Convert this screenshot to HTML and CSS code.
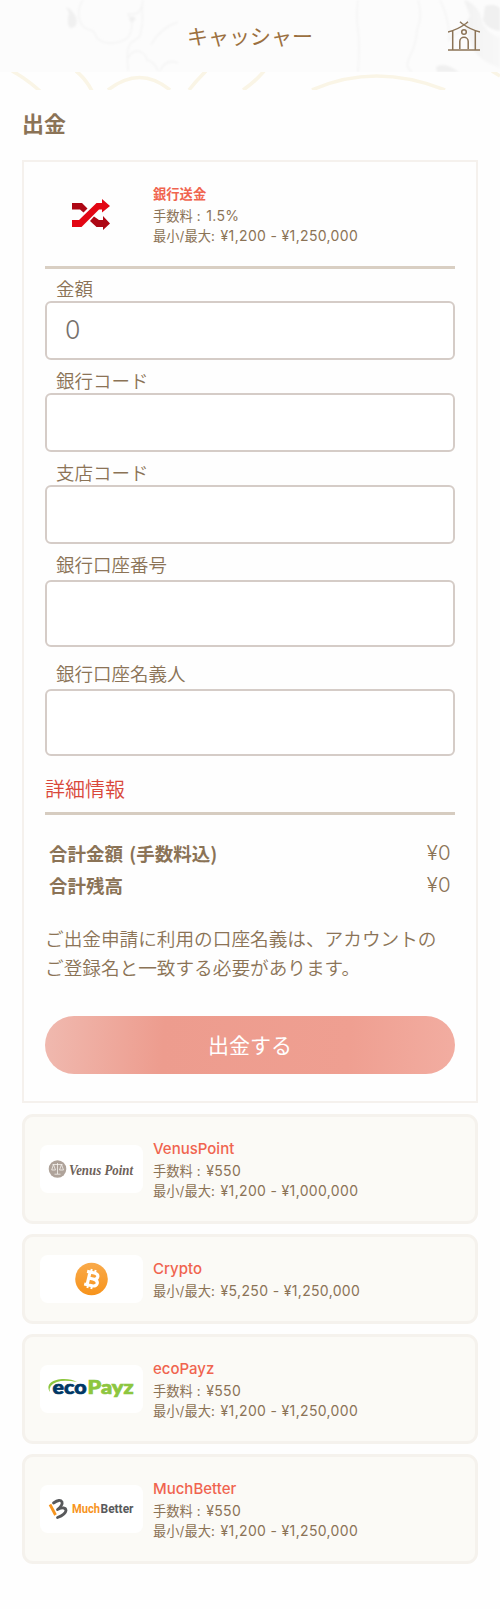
FILE: index.html
```html
<!DOCTYPE html>
<html lang="ja">
<head>
<meta charset="utf-8">
<title>キャッシャー</title>
<link rel="stylesheet" href="styles.css">
</head>
<body>
<header class="header">
  <svg class="marble" viewBox="0 0 500 72" fill="none" stroke="#f4f4f4">
    <defs>
      <linearGradient id="vein"><stop offset="0" stop-color="#f2f2f2"/><stop offset="1" stop-color="#f8f8f8"/></linearGradient>
      <filter id="soft" x="-20%" y="-20%" width="140%" height="140%"><feGaussianBlur stdDeviation=".8"/></filter>
    </defs>
    <g filter="url(#soft)">
      <path stroke-width="1.5" d="M83 0C76 10 77 27 90 30C94 30 95 34 97 38C106 47 126 43 130 34C135 20 129 17 128 14C140 16 142 8 143 0M143 0C140 12 145 20 141 30C142 37 136 39 132 42C125 48 128 60 128 71M128 58C135 45 146 53 147 60Q155 62 158 71M160 71Q166 58 178 63M358 0Q356 15 358 30T358 72M418 0Q423 16 417 30Q416 45 410 56T412 72M151 45Q160 28 178 22M440 0Q450 20 449 40Q470 20 486 28"/>
      <path fill="#f0f0f0" stroke="none" d="M69 13Q66 24 70 28Q79 28 76 17Q71 8 66 7ZM130 17Q137 15 135 20Q131 25 129 19ZM485 6Q497 3 500 9V31Q486 29 483 20ZM436 67Q444 61 459 72H437Z"/>
      <path fill="url(#vein)" stroke="none" d="M464 0Q480 4 483 25Q490 35 500 37V68Q474 59 471 42Q462 25 470 16Z"/>
    </g>
  </svg>
  <h1 class="header-title">キャッシャー</h1>
  <svg class="home" viewBox="0 0 32 31" fill="none" stroke="#8b7356" stroke-width="1.5">
    <path d="M0 29H32M4.7 29V9.8M27.3 29V9.8M0 11Q9 9 18 2.5L20 .8M32 11Q23 9 14 2.5L12 .8M11.8 28V20.5a4.2 4.2 0 0 1 8.4 0V28"/>
    <circle cx="16" cy="11" r="2.3"/>
  </svg>
</header>
<svg class="waves" viewBox="0 0 500 18" fill="none" stroke="#faf5e6" stroke-width="3.6">
  <path d="M12 -1Q25 6 40 19M76 -1Q86 7 92 19M108 18Q140 -7 170 18M189 18Q196 9 206 -1M243 18Q255 10 264 -1M312 18Q375 -10 445 18M492 -1L500 4"/>
</svg>
<main class="main">
  <h2 class="page-title">出金</h2>
  <section class="panel">
    <div class="method">
      <div class="method-logo">
        <svg class="shuffle" viewBox="0 0 38 32">
          <path fill="#ad0714" d="M0 4H10L15.500 9.500L11.500 13.500L8 10.500H0ZM22 17.500L27 21H31V17L38 24.500L31 31V28H24.500L18 22Z"/>
          <path fill="#e20613" d="M0 21H7L24.500 4H30V0L38 7L30 13.500V10.500H27L9.500 28H0Z"/>
        </svg>
      </div>
      <div class="info">
        <h3 class="name name-ja">銀行送金</h3>
        <p class="detail">手数料 : <span class="amount">1.5%</span></p>
        <p class="detail">最小/最大: <span class="amount">¥1,200 - ¥1,250,000</span></p>
      </div>
    </div>
    <form class="form">
      <label class="field"><span class="label">金額</span><input class="input" value="0"></label>
      <label class="field"><span class="label">銀行コード</span><input class="input"></label>
      <label class="field"><span class="label">支店コード</span><input class="input"></label>
      <label class="field field-large"><span class="label">銀行口座番号</span><input class="input"></label>
      <label class="field field-large field-last"><span class="label">銀行口座名義人</span><input class="input"></label>
      <h3 class="details-title">詳細情報</h3>
      <dl class="totals">
        <div class="total"><dt>合計金額 (手数料込)</dt><dd>¥0</dd></div>
        <div class="total"><dt>合計残高</dt><dd>¥0</dd></div>
      </dl>
      <p class="note">ご出金申請に利用の口座名義は、アカウントの<br>ご登録名と一致する必要があります。</p>
      <button class="submit" type="button">出金する</button>
    </form>
  </section>
  <section class="card">
    <div class="logo">
      <svg viewBox="0 0 103 48">
        <circle cx="17.500" cy="24" r="8.800" fill="#afa39a"/>
        <g fill="none" stroke="#f5f2ef" stroke-width=".8"><path d="M12.500 19.500H22.500M17.500 18V29M14.500 29.200H20.500M13.500 19.500L11.700 25H15.500L13.500 19.500M21.500 19.500L19.500 25H23.500L21.500 19.500"/></g>
        <text class="venus" x="29" y="30" textLength="64" lengthAdjust="spacingAndGlyphs">Venus Point</text>
      </svg>
    </div>
    <div class="info">
      <h3 class="name">VenusPoint</h3>
      <p class="detail">手数料 : <span class="amount">¥550</span></p>
      <p class="detail">最小/最大: <span class="amount">¥1,200 - ¥1,000,000</span></p>
    </div>
  </section>
  <section class="card card-short">
    <div class="logo">
      <svg viewBox="0 0 103 48">
        <defs><linearGradient id="coin" x2="0" y2="1"><stop stop-color="#f9aa4b"/><stop offset="1" stop-color="#f7931a"/></linearGradient></defs>
        <circle cx="51.500" cy="24" r="16.300" fill="url(#coin)"/>
        <g transform="translate(51.500 24) rotate(13)" fill="none" stroke="#fff">
          <path stroke-width="3.200" d="M-3 -6.500V6.500M-6 -6.500H1.500C7 -6.500 7 -.3 1.500 -.3H-2M1.500 -.3C8.200 -.3 8.200 6.500 2 6.500H-6"/>
          <path stroke-width="2" d="M-2 -9.800V-6M2 -9.800V-6M-2 6V9.800M2 6V9.800"/>
        </g>
      </svg>
    </div>
    <div class="info">
      <h3 class="name">Crypto</h3>
      <p class="detail">最小/最大: <span class="amount">¥5,250 - ¥1,250,000</span></p>
    </div>
  </section>
  <section class="card">
    <div class="logo">
      <svg viewBox="0 0 103 48">
        <path fill="#8dc63f" d="M10 27C5 19 13 14 24 14Q32 14 37 17Q24 14.500 17 17Q8 20 10 27Z"/>
        <text class="eco" fill="#003764" stroke="#003764" x="12.500" y="28.500" textLength="34" lengthAdjust="spacingAndGlyphs">eco</text>
        <text class="eco" fill="#8dc63f" stroke="#8dc63f" x="47.500" y="28.500" textLength="46" lengthAdjust="spacingAndGlyphs">Payz</text>
      </svg>
    </div>
    <div class="info">
      <h3 class="name">ecoPayz</h3>
      <p class="detail">手数料 : <span class="amount">¥550</span></p>
      <p class="detail">最小/最大: <span class="amount">¥1,200 - ¥1,250,000</span></p>
    </div>
  </section>
  <section class="card">
    <div class="logo">
      <svg viewBox="0 0 103 48">
        <g fill="none" stroke-width="2.800">
          <path stroke="#f7941d" d="M10 19.500L15.500 30"/>
          <path stroke="#58595b" stroke-linejoin="round" stroke-linecap="round" d="M13.500 18Q20 13.500 22 17Q23 20 17.500 24.500Q25.500 21 26 25.500Q25.500 29.500 17.500 32.500"/>
        </g>
        <text class="much" fill="#f7941d" x="32" y="28.300" textLength="28" lengthAdjust="spacingAndGlyphs">Much</text>
        <text class="much" fill="#58595b" x="60.500" y="28.300" textLength="33" lengthAdjust="spacingAndGlyphs">Better</text>
      </svg>
    </div>
    <div class="info">
      <h3 class="name">MuchBetter</h3>
      <p class="detail">手数料 : <span class="amount">¥550</span></p>
      <p class="detail">最小/最大: <span class="amount">¥1,200 - ¥1,250,000</span></p>
    </div>
  </section>
</main>
</body>
</html>
```
FILE: styles.css
```css
* { box-sizing: border-box; }
body, h1, h2, h3, p, dl, dd { margin: 0; }
body {
  min-height: 1609px;
  background: #fefefe;
  color: #8b7356;
  font-family: Inter, "Noto Sans CJK JP", sans-serif;
}
.header {
  position: relative;
  display: flex;
  align-items: center;
  justify-content: center;
  height: 72px;
  padding-bottom: 2px;
  background: #fcfcfc;
}
.marble { position: absolute; inset: 0; width: 500px; height: 72px; }
.header-title {
  position: relative;
  color: #9b7040;
  font: 400 21px/30px "Noto Sans CJK JP", sans-serif;
}
.home { position: absolute; left: 448px; top: 21px; width: 32px; height: 31px; }
.waves { display: block; width: 500px; height: 18px; }
.main { padding: 0 22px; }
.page-title {
  height: 70px;
  padding-top: 16px;
  font: 700 22px/32px "Noto Sans CJK JP", sans-serif;
}
.panel {
  height: 943px;
  padding: 0 21px;
  border: 2px solid #f5f1ed;
}
.method {
  display: flex;
  height: 107px;
  padding-top: 19px;
  border-bottom: 3px solid #d9cfc3;
}
.method-logo { width: 108px; padding: 18px 0 0 27px; }
.shuffle { display: block; width: 38px; height: 32px; }
.info { width: 300px; }
.name {
  height: 25px;
  color: #f0644f;
  font: 500 15px/25px Inter, sans-serif;
}
.name-ja { font: 700 13.300px/25px "Noto Sans CJK JP", sans-serif; }
.detail {
  height: 20px;
  font-family: Inter, "Noto Sans CJK JP", sans-serif;
  font-size: 13.300px;
  line-height: 20px;
  white-space: nowrap;
}
.amount { margin-left: 2px; font-size: 14px; letter-spacing: .340px; }
.field { display: block; height: 92px; }
.label {
  display: block;
  height: 32px;
  padding: 6px 0 0 11px;
  font: 350 18.500px/26px "Noto Sans CJK JP", sans-serif;
}
.input {
  display: block;
  width: 410px;
  height: 59px;
  padding: 0 18px 2px;
  border: 2px solid #d5ccc7;
  border-radius: 6px;
  outline: 0;
  background: #fff;
  color: #77716c;
  font: 300 25px Inter, sans-serif;
}
.field-large { height: 109px; }
.field-large .label { height: 35px; }
.field-large .input { height: 67px; }
.details-title {
  height: 52px;
  padding-top: 11px;
  border-bottom: 3px solid #d6ccc0;
  color: #d9483b;
  font: 350 20px/29px "Noto Sans CJK JP", sans-serif;
}
.totals { padding: 22px 4px 0; }
.total { display: flex; justify-content: space-between; height: 32px; line-height: 32px; }
.total dt { font: 700 18.500px/32px "Noto Sans CJK JP", sans-serif; word-spacing: 2px; }
.total dd { font-size: 20.500px; font-weight: 300; letter-spacing: .3px; }
.note {
  height: 115px;
  padding-top: 22px;
  font: 350 18.650px/29px "Noto Sans CJK JP", sans-serif;
  white-space: nowrap;
}
.submit {
  display: block;
  width: 410px;
  height: 58px;
  padding: 0 0 2px;
  border: 0;
  border-radius: 29px;
  background: linear-gradient(93deg, #f0b9af, #ed9c8e 29%, #ef9f91 74%, #f2ada1);
  color: #fff;
  font: 400 21px "Noto Sans CJK JP", sans-serif;
}
.card {
  display: flex;
  align-items: center;
  height: 110px;
  margin-top: 10px;
  padding-left: 15px;
  border: 3px solid #f5f2ed;
  border-radius: 11px;
  background: #fbfaf6;
}
.card .info { padding-bottom: 2px; }
.panel + .card { margin-top: 11px; }
.card-short { height: 90px; }
.logo { width: 103px; height: 48px; margin-right: 10px; border-radius: 8px; background: #fff; }
.logo svg { display: block; width: 103px; height: 48px; }
.venus { fill: #6d6159; font: italic 600 14px "Liberation Serif", serif; }
.eco { font: 900 18px Lato, sans-serif; stroke-width: .7px; }
.much { font: 700 12px Roboto, sans-serif; }
```
